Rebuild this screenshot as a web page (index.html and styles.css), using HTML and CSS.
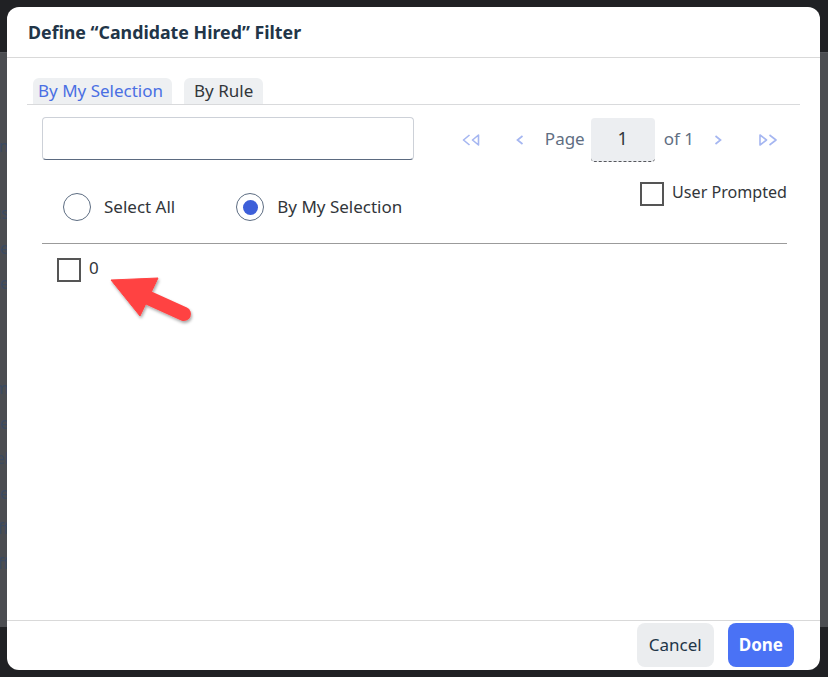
FILE: index.html
```html
<!DOCTYPE html>
<html lang="en">
<head>
    <meta charset="UTF-8">
    <meta name="viewport" content="width=device-width, initial-scale=1.0">
    <title>Define Filter</title>
    <link rel="stylesheet" href="styles.css">
</head>
<body>
    <div class="page">
        <div class="page-top"></div>
        <div class="page-main">
            <ul class="page-list">
                <li class="gap-a">Column</li>
                <li class="gap-b">Status</li>
                <li>Source</li>
                <li>Name</li>
                <li class="gap-c">Team</li>
                <li>Date</li>
                <li>Level</li>
                <li>Role</li>
                <li>Staff</li>
                <li>Staff</li>
            </ul>
        </div>
        <div class="page-bottom"></div>
    </div>

    <div class="dialog">
        <div class="dialog-header">
            <h2>Define “Candidate Hired” Filter</h2>
        </div>

        <div class="dialog-body">
            <div class="tabs">
                <button class="tab tab-active">By My Selection</button>
                <button class="tab">By Rule</button>
            </div>

            <div class="panel">
                <div class="search-row">
                    <input type="text" class="search-input">
                    <div class="pager">
                        <span class="pager-btn pager-first">
                            <svg width="18" height="12" viewBox="0 0 18 12"><path d="M7.5 1 L1.5 6 L7.5 11 M16.5 1 L10.5 6 L16.5 11 Z" fill="none" stroke="currentColor" stroke-width="1.6" stroke-linejoin="round"/></svg>
                        </span>
                        <span class="pager-btn pager-prev">
                            <svg width="8" height="12" viewBox="0 0 8 12"><path d="M6.5 2 L1.5 6 L6.5 10" fill="none" stroke="currentColor" stroke-width="1.7"/></svg>
                        </span>
                        <span class="pager-label">Page</span>
                        <span class="pager-input">1</span>
                        <span class="pager-label">of 1</span>
                        <span class="pager-btn pager-next">
                            <svg width="8" height="12" viewBox="0 0 8 12"><path d="M1.5 2 L6.5 6 L1.5 10" fill="none" stroke="currentColor" stroke-width="1.7"/></svg>
                        </span>
                        <span class="pager-btn">
                            <svg width="20" height="12" viewBox="0 0 20 12"><path d="M2 1 L8.5 6 L2 11 Z M11.5 1 L18 6 L11.5 11" fill="none" stroke="currentColor" stroke-width="1.6" stroke-linejoin="round"/></svg>
                        </span>
                    </div>
                </div>

                <div class="options-row">
                    <div class="radios">
                        <label class="radio"><span class="radio-dot"></span>Select All</label>
                        <label class="radio radio-on"><span class="radio-dot"></span>By My Selection</label>
                    </div>
                    <label class="check check-prompt"><span class="check-box"></span>User Prompted</label>
                </div>

                <div class="value-list">
                    <label class="check"><span class="check-box"></span>0</label>
                </div>
            </div>

            <svg class="callout" width="110" height="70" viewBox="100 260 110 70">
                <defs>
                    <filter id="shade" x="-20%" y="-20%" width="150%" height="150%">
                        <feDropShadow dx="1" dy="2" stdDeviation="1.5" flood-color="#000" flood-opacity="0.35"/>
                    </filter>
                </defs>
                <g filter="url(#shade)" fill="#ff4343" stroke="#ff4343">
                    <line x1="142" y1="294" x2="184" y2="313" stroke-width="14" stroke-linecap="round"/>
                    <polygon points="111,279 158,277 140,315" stroke-width="1" stroke-linejoin="round"/>
                </g>
            </svg>
        </div>

        <div class="dialog-footer">
            <button class="btn btn-ghost">Cancel</button>
            <button class="btn btn-primary">Done</button>
        </div>
    </div>
</body>
</html>
```

FILE: styles.css
```css
* { margin: 0; padding: 0; box-sizing: border-box; }
body { font-family: "Noto Sans", "Open Sans", sans-serif; background: #4b4d51; color: #32363a; width: 828px; height: 677px; overflow: hidden; position: relative; }

.page { display: flex; flex-direction: column; height: 100%; }
.page-top { height: 52px; background: #202124; }
.page-main { flex: 1; background: #4b4d51; border-top: 1px solid #55575c; }
.page-bottom { height: 50px; background: #202124; }
.page-list { list-style: none; width: 9px; overflow: hidden; direction: rtl; color: #3a4a62; font-size: 16px; }
.page-list li { height: 35px; line-height: 35px; white-space: nowrap; }
.page-list .gap-a { margin-top: 76px; }
.page-list .gap-b { margin-top: 32px; }
.page-list .gap-c { margin-top: 70px; }

.dialog { position: absolute; left: 7px; top: 7px; width: 813px; height: 663px; background: #fff; border-radius: 12px; display: flex; flex-direction: column; overflow: hidden; }
.dialog-header { height: 51px; border-bottom: 1px solid #d9d9d9; padding: 0 21px; display: flex; align-items: center; }
.dialog-header h2 { font-size: 17.8px; font-weight: 700; color: #223548; }

.dialog-body { flex: 1; padding: 20px 20px 0; position: relative; }
.tabs { display: flex; gap: 12px; padding-left: 6px; border-bottom: 1px solid #d9dadc; }
.tab { font-family: inherit; font-size: 17px; background: #eef0f2; border: none; border-radius: 6px 6px 0 0; height: 26px; padding: 0 10px 1px; color: #32363a; }
.tab-active { color: #4a6fe3; padding: 0 9px 1px 5px; }

.panel { padding: 12px 13px 0 15px; }
.search-row { display: flex; align-items: flex-start; justify-content: space-between; }
.search-input { width: 372px; height: 43px; border: 1px solid #cdd1d8; border-bottom: 1px solid #5b6a80; border-radius: 4px; }
.pager { display: flex; align-items: center; color: #5f6e82; font-size: 17px; margin: 1px 9px 0 0; }
.pager-label { padding-bottom: 4px; }
.pager-btn { color: #a5b6f1; display: flex; align-items: center; }
.pager-first { margin-right: 36px; }
.pager-prev { margin-right: 21px; }
.pager-next { margin: 0 36px 0 20px; }
.pager-input { width: 64px; height: 44px; margin: 0 9px 0 6px; padding-bottom: 3px; background: #eceef1; border-radius: 4px; border-bottom: 1px dashed #55575c; display: flex; align-items: center; justify-content: center; color: #32363a; font-size: 18px; }

.options-row { display: flex; justify-content: space-between; align-items: flex-start; padding: 20px 0 0; height: 82px; border-bottom: 1px solid #9b9b9b; }
.radios { display: flex; gap: 61px; margin: 9px 0 0 21px; }
.radio { display: flex; align-items: center; gap: 13px; font-size: 17px; color: #32363a; }
.radio-dot { width: 28px; height: 28px; margin-top: 2px; border: 1px solid #5d6d82; border-radius: 50%; display: flex; align-items: center; justify-content: center; }
.radio-on .radio-dot::after { content: ""; width: 15px; height: 15px; background: #3d5fd9; border-radius: 50%; }

.check { display: flex; align-items: flex-start; gap: 8px; font-size: 17px; color: #32363a; line-height: 20px; }
.check-box { width: 24px; height: 24px; border: 2px solid #555; }
.check-prompt { font-size: 16.1px; }
.value-list { padding: 14px 0 0 15px; }

.callout { position: absolute; left: 93px; top: 203px; }

.dialog-footer { height: 50px; border-top: 1px solid #d9d9d9; display: flex; justify-content: flex-end; align-items: flex-start; gap: 14px; padding: 2px 26px 0; }
.btn { font-family: inherit; font-size: 17px; height: 44px; border: none; border-radius: 8px; padding: 0 12px 2px; }
.btn-ghost { background: #ebedef; color: #223548; }
.btn-primary { background: #4a72f5; color: #fff; font-weight: 700; padding: 0 11px 2px; }
```
